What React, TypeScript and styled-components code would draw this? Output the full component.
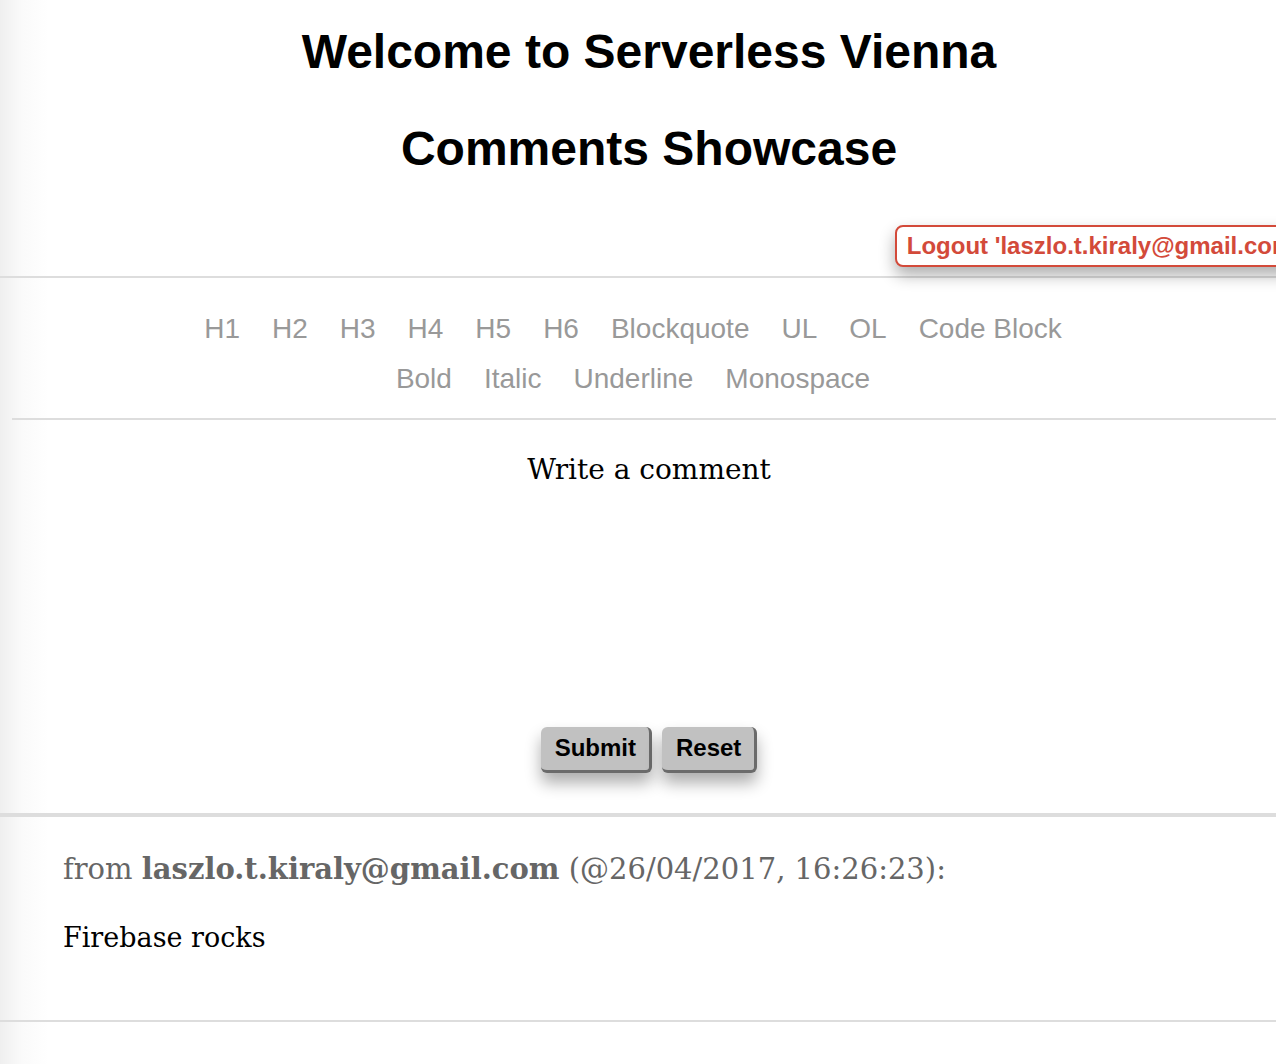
import React, { FunctionComponent } from "react";
import styled, { createGlobalStyle } from "styled-components";

const SANS = `"Liberation Sans", Arial, Helvetica, sans-serif`;
const SERIF = `"DejaVu Serif", Georgia, serif`;
const LINE = "#dddddd";
const RED = "#d34a3a";

const GlobalStyle = createGlobalStyle`
  html, body {
    margin: 0;
    padding: 0;
    overflow-x: hidden;
  }
  body {
    background: linear-gradient(90deg, #efefef 0, #fafafa 22px, #ffffff 48px);
    min-height: 1064px;
  }
`;

const Page = styled.div`
  width: 1298px;
  display: flex;
  flex-direction: column;
  padding-top: 24px;
`;

const Title = styled.h1`
  margin: 0;
  font-family: ${SANS};
  font-size: 48px;
  font-weight: 700;
  line-height: 55px;
  color: #000;
  text-align: center;

  & + & {
    margin-top: 42px;
  }
`;

const LogoutRow = styled.div`
  display: flex;
  justify-content: flex-end;
  margin-top: 49px;
  margin-right: -13px;
  height: 42px;
`;

const LogoutButton = styled.button`
  position: relative;
  z-index: 1;
  font-family: ${SANS};
  font-size: 24px;
  font-weight: 700;
  line-height: 28px;
  color: ${RED};
  background: #fff;
  border: 2px solid ${RED};
  border-radius: 8px;
  padding: 5px 10px;
  white-space: nowrap;
  box-shadow: 0 8px 16px rgba(0, 0, 0, 0.32);
  cursor: pointer;
`;

const Rule = styled.hr<{ $thick?: number }>`
  margin: 0;
  border: 0;
  height: ${(p) => p.$thick ?? 2}px;
  background: ${LINE};
`;

const TopRule = styled(Rule)`
  margin-top: 9px;
`;

const Editor = styled.div`
  margin: 0 12px;
  display: flex;
  flex-direction: column;
`;

const Controls = styled.div`
  display: flex;
  flex-direction: column;
  gap: 18px;
  padding: 35px 0 23px;
  border-bottom: 2px solid ${LINE};
`;

const ControlRow = styled.div`
  display: flex;
  justify-content: center;
`;

const StyleButton = styled.span`
  font-family: ${SANS};
  font-size: 28px;
  line-height: 32px;
  color: #999;
  margin-right: 32px;
  cursor: pointer;
`;

const Placeholder = styled.div`
  font-family: ${SERIF};
  font-size: 28px;
  line-height: 33px;
  color: #000;
  text-align: center;
  padding-top: 33px;
  height: 274px;
`;

const Actions = styled.div`
  display: flex;
  justify-content: center;
  gap: 10px;
  padding-bottom: 40px;
`;

const ActionButton = styled.button`
  font-family: ${SANS};
  font-size: 24px;
  font-weight: 700;
  line-height: 28px;
  color: #000;
  background: #c1c1c1;
  border: 0;
  border-right: 3px solid #6b6b6b;
  border-bottom: 3px solid #6b6b6b;
  border-radius: 6px;
  padding: 7px 13px 8px 14px;
  box-shadow: 0 10px 16px rgba(0, 0, 0, 0.32);
  cursor: pointer;
`;

const CommentList = styled.div`
  display: flex;
  flex-direction: column;
`;

const CommentItem = styled.div`
  padding: 36px 0 66px 63px;
  border-bottom: 2px solid ${LINE};
  display: flex;
  flex-direction: column;
  gap: 37px;
`;

const CommentMeta = styled.div`
  font-family: ${SERIF};
  font-size: 29px;
  line-height: 32px;
  color: #666;
  white-space: nowrap;

  b {
    font-weight: 700;
  }
`;

const CommentBody = styled.div`
  font-family: ${SERIF};
  font-size: 27px;
  line-height: 32px;
  color: #000;
`;

const blockTypes = ["H1", "H2", "H3", "H4", "H5", "H6", "Blockquote", "UL", "OL", "Code Block"];
const inlineStyles = ["Bold", "Italic", "Underline", "Monospace"];

interface Comment {
  author: string;
  date: string;
  text: string;
}

const comments: Comment[] = [
  { author: "laszlo.t.kiraly@gmail.com", date: "26/04/2017, 16:26:23", text: "Firebase rocks" },
];

const CommentView: FunctionComponent<{ comment: Comment }> = ({ comment }) => (
  <CommentItem>
    <CommentMeta>
      from <b>{comment.author}</b> (@{comment.date}):
    </CommentMeta>
    <CommentBody>{comment.text}</CommentBody>
  </CommentItem>
);

const App: FunctionComponent = () => {
  return (
    <>
      <GlobalStyle />
      <Page>
        <Title>Welcome to Serverless Vienna</Title>
        <Title>Comments Showcase</Title>
        <LogoutRow>
          <LogoutButton>Logout 'laszlo.t.kiraly@gmail.com'</LogoutButton>
        </LogoutRow>
        <TopRule />
        <Editor>
          <Controls>
            <ControlRow>
              {blockTypes.map((t) => (
                <StyleButton key={t}>{t}</StyleButton>
              ))}
            </ControlRow>
            <ControlRow>
              {inlineStyles.map((s) => (
                <StyleButton key={s}>{s}</StyleButton>
              ))}
            </ControlRow>
          </Controls>
          <Placeholder>Write a comment</Placeholder>
          <Actions>
            <ActionButton>Submit</ActionButton>
            <ActionButton>Reset</ActionButton>
          </Actions>
        </Editor>
        <Rule $thick={4} />
        <CommentList>
          {comments.map((c) => (
            <CommentView key={c.date} comment={c} />
          ))}
        </CommentList>
      </Page>
    </>
  );
};

export default App;
